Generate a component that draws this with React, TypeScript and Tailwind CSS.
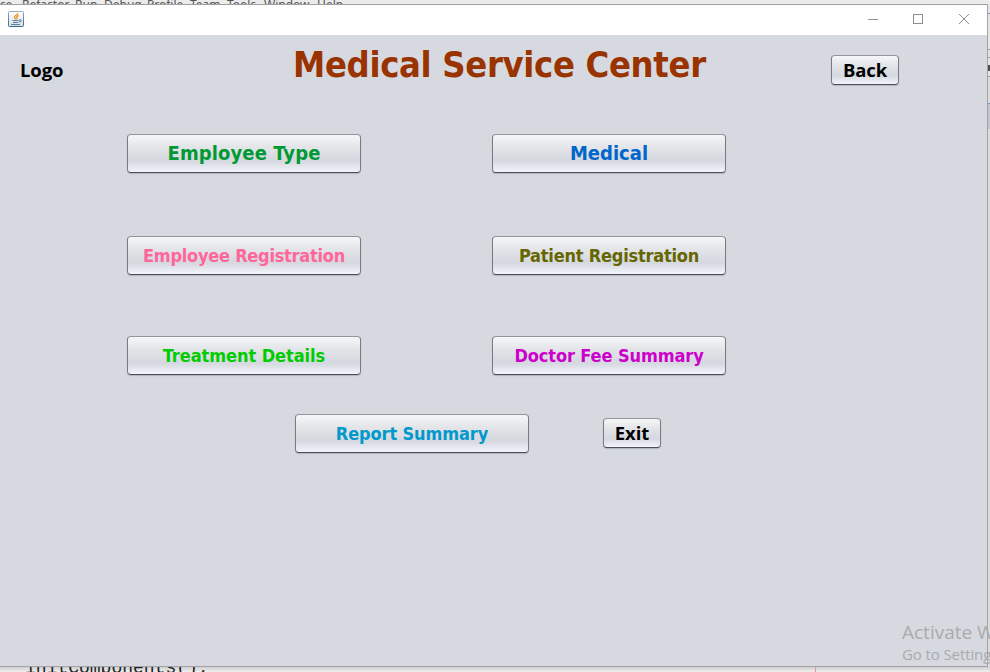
import type { ReactNode } from "react";

const raised =
  "flex shrink-0 items-center justify-center whitespace-nowrap rounded-[4px] border border-t-[#92959b] border-x-[#777a80] border-b-[#4c4e53] bg-[linear-gradient(to_bottom,#f6f7f8_0%,#e5e6e9_30%,#d6d9e0_65%,#d6d9e0_72%,#f2f5fb_100%)] shadow-[0_1px_1px_rgba(120,124,134,0.4)]";
const tahoma = "font-['DejaVu_Sans_Condensed','DejaVu_Sans',sans-serif] font-bold [font-stretch:condensed]";
const segoe = "font-['Open_Sans','Noto_Sans',sans-serif] font-bold tracking-[-0.1px]";

function MenuButton({ children, className }: { children: ReactNode; className: string }) {
  return (
    <button className={`${raised} ${tahoma} h-[39px] w-[234px] ${className}`}>
      <span>{children}</span>
    </button>
  );
}

function SmallButton({ children, className }: { children: ReactNode; className: string }) {
  return (
    <button className={`${raised} ${segoe} h-[30px] text-[18.5px] leading-[24px] text-black ${className}`}>
      <span>{children}</span>
    </button>
  );
}

function JavaIcon() {
  return (
    <svg width="16" height="16" viewBox="0 0 16 16" fill="none">
      <defs>
        <linearGradient id="tile" x1="0" y1="0" x2="0" y2="1">
          <stop offset="0" stopColor="#ffffff" />
          <stop offset="1" stopColor="#d5dee6" />
        </linearGradient>
        <linearGradient id="edge" x1="0" y1="0" x2="0" y2="1">
          <stop offset="0" stopColor="#9cabb8" />
          <stop offset="1" stopColor="#3f647f" />
        </linearGradient>
      </defs>
      <rect x="0.5" y="0.5" width="15" height="15" rx="1" fill="url(#tile)" stroke="url(#edge)" />
      <path d="M9.8 2.2C10 4 6.300 4.600 6.400 6.100C6.500 7 7.500 7.300 7.600 8.400M10.600 4.600C9 5.200 8.200 6 8.900 6.900C9.300 7.500 8.900 8 8.600 8.400" stroke="#ee8a1d" strokeWidth="1.200" />
      <path d="M4.500 9.500H10.800M5 11.500H10.300M3.300 13.500H11.800M11.300 9C13.600 8.500 13.500 10.500 11.300 10.900" stroke="#557f9e" strokeWidth="1.100" />
    </svg>
  );
}

function TitleBar() {
  return (
    <header className="flex h-[30px] shrink-0 items-center bg-white pl-2">
      <div className="-mt-[2px]">
        <JavaIcon />
      </div>
      <div className="ml-auto flex items-center">
        <svg width="119" height="30" viewBox="0 0 119 30" fill="none" stroke="#8f8f8f" shapeRendering="crispEdges">
          <path d="M0 14.5H10" />
          <rect x="45.500" y="9.500" width="9" height="9" />
          <path d="M91 9L101 19M101 9L91 19" shapeRendering="auto" />
        </svg>
      </div>
    </header>
  );
}

export default function App() {
  return (
    <div className="relative flex h-[672px] w-[990px] flex-col overflow-hidden bg-[#ececec]">
      <div className="h-[4px] shrink-0 overflow-hidden whitespace-pre bg-[#ececec] font-['Noto_Sans',sans-serif] text-[12px] text-[#555]">
        <div className="-mt-[3px] flex leading-[16px]">
          <span className="-ml-[5px] w-[27px]">rce</span>
          <span className="w-[53px]">Refactor</span>
          <span className="w-[29px]">Run</span>
          <span className="w-[43px]">Debug</span>
          <span className="w-[43px]">Profile</span>
          <span className="w-[37px]">Team</span>
          <span className="w-[37px]">Tools</span>
          <span className="w-[53px]">Window</span>
          <span>Help</span>
        </div>
      </div>

      <div className="flex h-[663px] shrink-0">
        <main className="flex w-[988px] shrink-0 flex-col border-t border-r border-b border-t-[#a0a0a0] border-r-[#a3a3a5] border-b-[#a3a3a5] bg-[#d6d9e0]">
          <TitleBar />
          <div className="flex h-[99px] shrink-0 items-start">
            <div className={`${segoe} ml-[20px] mt-[23px] w-[273px] text-[18.5px] leading-[24px] text-black`}>Logo</div>
            <h1 className={`${tahoma} mt-[8px] w-[538px] whitespace-nowrap text-[36px] leading-[44px] tracking-[-0.330px] text-[#993300]`}>
              Medical Service Center
            </h1>
            <SmallButton className="mt-[20px] w-[68px]">Back</SmallButton>
          </div>
          <div className="ml-[127px] grid grid-cols-[234px_234px] grid-rows-[102px_100px_78px] items-start gap-x-[131px]">
            <MenuButton className="pb-[2px] text-[20px] tracking-[0.1px] text-[#009933]">Employee Type</MenuButton>
            <MenuButton className="pb-[2px] text-[20px] text-[#0066cc]">Medical</MenuButton>
            <MenuButton className="text-[18px] tracking-[-0.250px] text-[#ff6699]">Employee Registration</MenuButton>
            <MenuButton className="text-[18px] tracking-[-0.210px] text-[#666600]">Patient Registration</MenuButton>
            <MenuButton className="text-[18px] tracking-[-0.060px] text-[#00cc00]">Treatment Details</MenuButton>
            <MenuButton className="text-[18px] tracking-[-0.100px] text-[#cc00cc]">Doctor Fee Summary</MenuButton>
          </div>
          <div className="ml-[295px] flex items-start gap-[74px]">
            <MenuButton className="text-[18px] tracking-[-0.120px] text-[#0099cc]">Report Summary</MenuButton>
            <SmallButton className="mt-[4px] w-[58px]">Exit</SmallButton>
          </div>
        </main>
        <aside className="flex w-[2px] flex-col overflow-hidden bg-[#dcdcdc]">
          <div className="h-[9px] bg-[#e6e6e6]" />
          <div className="h-px bg-[#7896b4]" />
          <div className="h-[35px] bg-[#e6e6e6]" />
          <div className="h-px bg-[#999]" />
          <div className="h-[7px] bg-[#e2e2e2]" />
          <div className="h-px bg-[#999]" />
          <div className="h-[7px] bg-[#e6e6e6]" />
          <div className="h-[6px] bg-[#4c4c4c]" />
          <div className="h-[5px] bg-[#e6e6e6]" />
          <div className="h-px bg-[#999]" />
          <div className="h-[26px] bg-[#dcdcdc]" />
          <div className="h-px bg-[#7896b4]" />
          <div className="h-[25px] bg-[#c2c5cf]" />
        </aside>
      </div>

      <footer className="flex h-[5px] shrink-0 overflow-hidden bg-linear-to-b from-[#cfcfcf] to-[#efefef]">
        <pre className="-mt-[9px] ml-[25px] w-[790px] font-['Liberation_Mono',monospace] text-[18px] leading-[20px] text-[#222]">initComponents();</pre>
        <div className="h-full w-px bg-[#e39a9a]" />
      </footer>

      <div className="absolute left-[902px] top-[620px] whitespace-nowrap font-['Open_Sans','Noto_Sans',sans-serif] text-[#a9abae]">
        <div className="text-[19px] leading-[24px]">Activate Windows</div>
        <div className="text-[15px] leading-[21px] tracking-[-0.1px]">Go to Settings to activate Windows.</div>
      </div>
    </div>
  );
}
